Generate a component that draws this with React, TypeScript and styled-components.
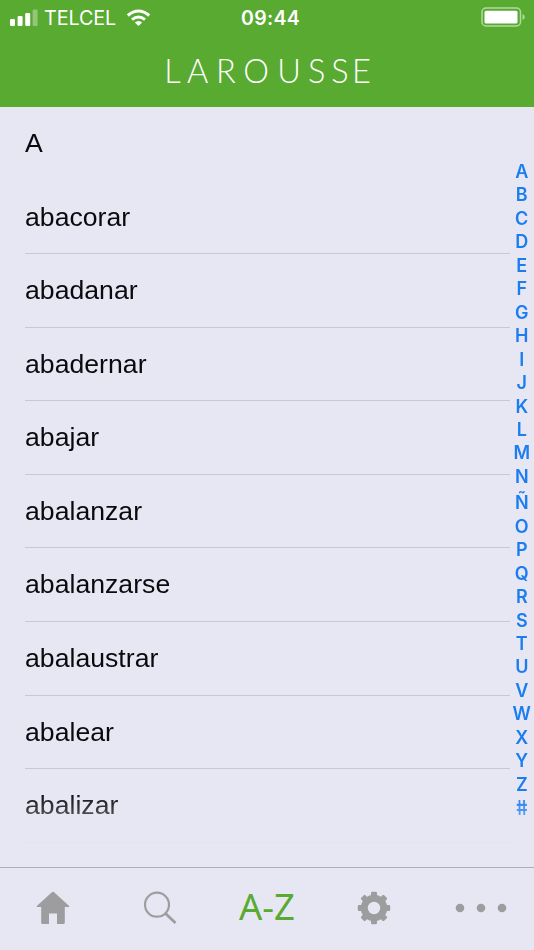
import React from "react";
import styled, { createGlobalStyle } from "styled-components";

const GlobalStyle = createGlobalStyle`
  * { box-sizing: border-box; }
  html, body { margin: 0; padding: 0; }
  body { background: #e7e7f3; overflow: hidden; }
`;

const Screen = styled.div`
  width: 534px;
  height: 950px;
  display: flex;
  flex-direction: column;
  background: #e7e7f3;
  color: #0a0a0e;
  font-family: "Liberation Sans", Arial, sans-serif;
  overflow: hidden;
`;

const Header = styled.header`
  flex: none;
  height: 107px;
  background: #58aa31;
  color: #fff;
`;

const StatusBar = styled.div`
  height: 36px;
  padding: 0 9px 0 10px;
  display: grid;
  grid-template-columns: 1fr auto 1fr;
  align-items: center;
  font-family: Inter, sans-serif;
`;

const Carrier = styled.div`
  display: flex;
  align-items: center;
  font-size: 19.8px;
  font-weight: 400;
  line-height: 34px;
  letter-spacing: -0.1px;
  svg { display: block; flex: none; }
`;

const CarrierName = styled.span`
  width: 87.5px;
  padding-left: 6px;
  white-space: nowrap;
`;

const Clock = styled.div`
  font-size: 19.5px;
  font-weight: 600;
  line-height: 34px;
  letter-spacing: 0.25px;
  padding-left: 6px;
`;

const Battery = styled.svg`
  display: block;
  justify-self: end;
  margin-bottom: 2px;
`;

const Brand = styled.svg`
  display: block;
  width: 534px;
  height: 71px;
  fill: #fff;
  font-family: Lato, sans-serif;
  font-weight: 300;
  font-size: 32.5px;
`;

const Content = styled.main`
  flex: none;
  height: 760px;
  display: flex;
  overflow: hidden;
  mask-image: linear-gradient(to bottom, #000 0, #000 686px, rgba(0, 0, 0, 0.68) 710px, rgba(0, 0, 0, 0.1) 735px, transparent 745px);
`;

const WordList = styled.div`
  width: 484.5px;
  margin-left: 25px;
  font-size: 26.6px;
  letter-spacing: 0.03px;
`;

const SectionTitle = styled.div`
  height: 73.5px;
  line-height: 73px;
`;

const Word = styled.div`
  height: 73.6px;
  line-height: 73px;
  border-bottom: 1px solid #c8c8d2;
`;

const LetterIndex = styled.nav`
  flex: 1;
  padding-top: 53px;
  display: flex;
  flex-direction: column;
  align-items: center;
  font-family: Inter, sans-serif;
  font-size: 18px;
  font-weight: 600;
  color: #1b7df0;
`;

const IndexLetter = styled.span<{ $accented: boolean; $upright: boolean }>`
  flex: none;
  height: ${(p) => (p.$accented ? 26.4 : 23.46)}px;
  padding-top: ${(p) => (p.$accented ? 3 : 0)}px;
  line-height: 24px;
  ${(p) => p.$upright && "transform: skewX(9deg) scaleY(1.15);"}
`;

const TabBar = styled.nav`
  flex: none;
  height: 83px;
  padding-bottom: 2px;
  border-top: 1px solid #afafbc;
  display: grid;
  grid-template-columns: repeat(5, 1fr);
  align-items: center;
  justify-items: center;
  color: #9d9d9f;
`;

const Tab = styled.div`
  display: flex;
  align-items: center;
  justify-content: center;
  height: 80px;
  svg { display: block; }
`;

const TextTab = styled(Tab)`
  color: #58aa31;
  font: 400 36.5px/76px "Noto Sans", sans-serif;
  white-space: nowrap;
  align-items: flex-start;
`;

const words = ["abacorar", "abadanar", "abadernar", "abajar", "abalanzar", "abalanzarse", "abalaustrar", "abalear", "abalizar"];
const letters = [..."ABCDEFGHIJKLMNÑOPQRSTUVWXYZ#"];
const teeth = [0, 45, 90, 135, 180, 225, 270, 315];

export default function App() {
  return (
    <Screen>
      <GlobalStyle />
      <Header>
        <StatusBar>
          <Carrier>
            <svg width="28" height="18" fill="#fff">
              <rect x="0" y="10" width="5" height="7" rx="1.2" />
              <rect x="7.6" y="7" width="5" height="10" rx="1.2" />
              <rect x="15.2" y="4" width="5" height="13" rx="1.2" />
              <rect x="22.6" y="0.5" width="5" height="16.5" rx="1.2" opacity=".35" />
            </svg>
            <CarrierName>TELCEL</CarrierName>
            <svg width="25" height="18" viewBox="0 0 25 18" fill="none" stroke="#fff" strokeWidth="3">
              <path d="M1.8 6.5Q12.5-2.6 23.2 6.5M6 10.7q6.5-5.3 13 0" />
              <path d="M8.8 13.4q3.7-3 7.4 0L12.5 17z" fill="#fff" stroke="none" />
            </svg>
          </Carrier>
          <Clock>09:44</Clock>
          <Battery width="44" height="20">
            <rect x="1" y="1" width="38.5" height="18" rx="4" fill="none" stroke="#fff" strokeWidth="1.5" opacity=".55" />
            <rect x="3.5" y="3.7" width="33" height="12.8" rx="1.5" fill="#fff" />
            <path d="M41.5 7q2.3 1 2.3 3t-2.3 3z" fill="#fff" opacity=".55" />
          </Battery>
        </StatusBar>
        <Brand viewBox="0 0 534 71">
          <text y="46.5" x="164.3 187 216 243.3 277.3 308 331.3 352">LAROUSSE</text>
        </Brand>
      </Header>
      <Content>
        <WordList>
          <SectionTitle>A</SectionTitle>
          {words.map((word) => <Word key={word}>{word}</Word>)}
        </WordList>
        <LetterIndex>
          {letters.map((letter) => (
            <IndexLetter key={letter} $accented={letter === "Ñ"} $upright={letter === "#"}>{letter}</IndexLetter>
          ))}
        </LetterIndex>
      </Content>
      <TabBar>
        <Tab>
          <svg width="34" height="34" viewBox="0 0 34 34" fill="currentColor">
            <path d="M17 .8q.6 0 1.1.5L33.2 15q.5 1-.5 1h-3.9v15.5q0 1.5-1.5 1.5H21V22.5h-8V33H6.7q-1.500 0-1.500-1.500V16H1.300q-1 0-.5-1L15.900 1.300q.5-.5 1.100-.5z" />
          </svg>
        </Tab>
        <Tab>
          <svg width="34" height="34" viewBox="0 0 34 34" fill="none" stroke="currentColor">
            <circle cx="14" cy="13.700" r="12" strokeWidth="2.200" />
            <path d="M22.500 22.500L32.500 32" strokeWidth="2.800" />
          </svg>
        </Tab>
        <TextTab>A-Z</TextTab>
        <Tab>
          <svg width="34" height="34" viewBox="0 0 34 34" fill="currentColor">
            <circle cx="17" cy="17" r="9.700" fill="none" stroke="currentColor" strokeWidth="7" />
            {teeth.map((angle) => (
              <path key={angle} transform={`rotate(${angle} 17 17)`} d="M14 5V2q0-1.200 1.200-1.200h3.600q1.200 0 1.200 1.200v3l1.500 2h-9z" />
            ))}
          </svg>
        </Tab>
        <Tab>
          <svg width="52" height="10" fill="currentColor">
            <circle cx="5" cy="5" r="4.300" />
            <circle cx="26" cy="5" r="4.300" />
            <circle cx="47" cy="5" r="4.300" />
          </svg>
        </Tab>
      </TabBar>
    </Screen>
  );
}
